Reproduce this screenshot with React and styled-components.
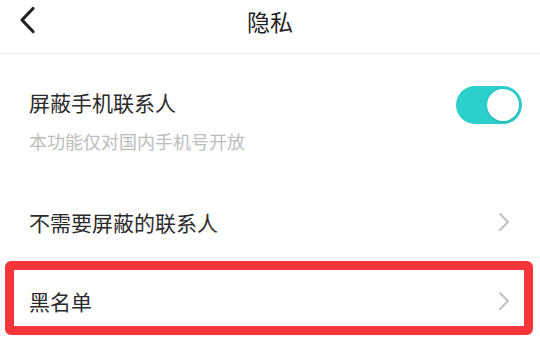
import React from "react";
import styled, { createGlobalStyle } from "styled-components";

const Global = createGlobalStyle`
  html, body { margin: 0; padding: 0; background: #fff; }
  body { font-family: "Noto Sans CJK SC", "Noto Sans", sans-serif; overflow: hidden; }
`;

const Page = styled.div`
  width: 540px;
  height: 340px;
  overflow: hidden;
  background: #fff;
`;

const Header = styled.div`
  position: relative;
  height: 53px;
  border-bottom: 1px solid #eeeeee;
  display: flex;
  align-items: center;
  justify-content: center;
`;

const BackButton = styled.div`
  position: absolute;
  left: 18px;
  top: 5px;
  width: 20px;
  height: 30px;
  display: flex;
`;

const Title = styled.div`
  font-size: 23px;
  line-height: 30px;
  color: #222;
  margin-top: -11px;
`;

const Row = styled.div`
  position: relative;
  display: flex;
  flex-direction: column;
  justify-content: ${(p) => (p.$top ? "flex-start" : "center")};
  height: ${(p) => p.$h}px;
  padding: ${(p) => p.$pad || "0 29px"};
  box-sizing: border-box;
  border-bottom: ${(p) => (p.$divider ? "1px solid #f2f2f2" : "none")};
  margin-left: ${(p) => (p.$divider ? "10px" : "0")};
`;

const Line = styled.div`
  display: flex;
  align-items: ${(p) => (p.$start ? "flex-start" : "center")};
  justify-content: space-between;
`;

const Label = styled.div`
  font-size: 21px;
  line-height: 28px;
  color: #2b2b2b;
  margin-top: ${(p) => p.$mt || 0}px;
`;

const Sub = styled.div`
  font-size: 18px;
  line-height: 24px;
  color: #bdbdbd;
  margin-top: 5px;
`;

const Switch = styled.div`
  width: 66px;
  height: 38px;
  border-radius: 19px;
  background: #2ccfcc;
  position: relative;
  margin-right: -11px;
`;

const Knob = styled.div`
  position: absolute;
  right: 3px;
  top: 3px;
  width: 32px;
  height: 32px;
  border-radius: 50%;
  background: #fff;
  box-shadow: 0 1px 3px rgba(0, 0, 0, 0.18);
`;

const Chevron = styled.svg`
  width: 13px;
  height: 20px;
  flex: none;
`;

const Highlight = styled.div`
  position: absolute;
  left: 5px;
  top: 3px;
  width: 528px;
  height: 74px;
  box-sizing: border-box;
  border: 9px solid #f4363a;
  border-radius: 6px;
  pointer-events: none;
`;

const Right = () => (
  <Chevron viewBox="0 0 13 20">
    <path d="M2 2 L10 10 L2 18" fill="none" stroke="#c2c2c2" strokeWidth="2" strokeLinecap="round" strokeLinejoin="round" />
  </Chevron>
);

export default function App() {
  return (
    <Page>
      <Global />
      <Header>
        <BackButton>
          <svg width="20" height="30" viewBox="0 0 20 30">
            <path d="M15 3.5 L4 15 L15 26.5" fill="none" stroke="#222" strokeWidth="3.2" strokeLinecap="round" strokeLinejoin="round" />
          </svg>
        </BackButton>
        <Title>隐私</Title>
      </Header>
      <Row $h={132} $top $pad="32px 29px 0 29px">
        <Line $start>
          <Label $mt={2}>屏蔽手机联系人</Label>
          <Switch>
            <Knob />
          </Switch>
        </Line>
        <Sub>本功能仅对国内手机号开放</Sub>
      </Row>
      <Row $h={72} $divider $pad="0 29px 0 19px">
        <Line>
          <Label>不需要屏蔽的联系人</Label>
          <Right />
        </Line>
      </Row>
      <Row $h={86}>
        <Line>
          <Label>黑名单</Label>
          <Right />
        </Line>
        <Highlight />
      </Row>
    </Page>
  );
}
